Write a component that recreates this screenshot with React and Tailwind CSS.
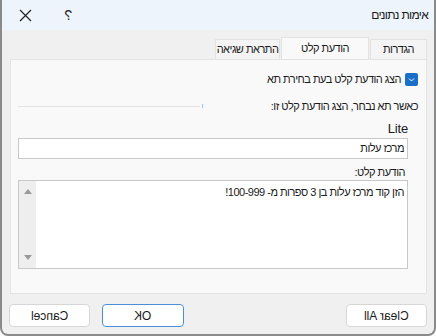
import React from 'react';

const font = { fontFamily: '"Liberation Sans", "DejaVu Sans", sans-serif' };

const tabs = [
  { label: 'הגדרות', w: 'w-[57px]', active: false },
  { label: 'הודעת קלט', w: 'w-[88px]', active: true },
  { label: 'התראת שגיאה', w: 'w-[65px]', active: false },
];

const Button = ({ label, primary, className }) => (
  <button
    className={`h-[23px] w-[81px] rounded-[4px] border bg-white text-[12px] tracking-normal text-[#1a1a1a] ${
      primary ? 'border-[#4a90d9]' : 'border-[#d6d6d6]'
    } ${className || ''}`}
  >
    <span className="inline-block -scale-x-100">{label}</span>
  </button>
);

const App = () => {
  return (
    <div
      dir="rtl"
      style={font}
      className="flex h-[336px] w-[436px] flex-col overflow-hidden rounded-b-lg border-2 border-t-0 border-[#8a8a8a] bg-[#f0f0f0] text-[11px] tracking-[-0.5px] text-[#1a1a1a]"
    >
      {/* title bar */}
      <div className="flex h-[30px] shrink-0 items-center justify-between bg-[#eef4fb] pl-[17px] pr-[6px]">
        <span className="text-[12px] tracking-[-0.7px]">אימות נתונים</span>
        <div className="flex items-center gap-[33px]">
          <span className="inline-block -scale-x-100 text-[14px]">?</span>
          <svg width="13" height="13" viewBox="0 0 13 13" className="text-[#222]">
            <path d="M1 1 L12 12 M12 1 L1 12" stroke="currentColor" strokeWidth="1.2" fill="none" />
          </svg>
        </div>
      </div>

      {/* tabs */}
      <div className="flex h-[29px] shrink-0 items-end gap-[1px] pr-[7px] pt-[7px]">
        {tabs.map((t) => (
          <div
            key={t.label}
            className={`flex items-center justify-center whitespace-nowrap border border-b-0 border-[#e3e3e3] ${t.w} ${
              t.active ? 'h-[22px] bg-[#f9f9f9]' : 'h-[20px] bg-[#f4f4f4]'
            }`}
          >
            {t.label}
          </div>
        ))}
      </div>

      {/* panel */}
      <div className="ml-[8px] mr-[7px] flex h-[235px] shrink-0 flex-col border border-[#e3e3e3] bg-[#f9f9f9] pl-[7px] pr-[18px]">
        <div className="-mr-[10px] mt-[13px] flex h-[13px] items-center gap-[4px]">
          <span className="flex h-[13px] w-[13px] items-center justify-center rounded-[2px] bg-[#1a6fc9]">
            <svg width="9" height="9" viewBox="0 0 9 9">
              <path d="M2 3.5 L4.5 6 L7 3.5" stroke="white" strokeWidth="1" fill="none" />
            </svg>
          </span>
          <span>הצג הודעת קלט בעת בחירת תא</span>
        </div>

        <div className="-mr-[10px] mt-[13px] flex h-[14px] items-center justify-between">
          <span>כאשר תא נבחר, הצג הודעת קלט זו:</span>
          <div className="flex items-center gap-[2px]">
            <span className="h-[4px] w-[1px] bg-[#9cc3e8]" />
            <span className="h-[1px] w-[182px] bg-[#e2e2e2]" />
          </div>
        </div>

        <div className="mt-[8px] h-[16px] text-[13px] leading-[16px] tracking-[-0.2px]">Lite</div>

        <div className="mt-[1px] flex h-[21px] items-center border border-[#c8c8c8] bg-white pr-[3px]">
          מרכז עלות
        </div>

        <div className="mt-[6px] h-[14px] pr-[3px] leading-[14px]">הודעת קלט:</div>

        <div className="mt-[1px] flex h-[89px] border border-[#c8c8c8] bg-white">
          <div className="flex-1 pr-[3px] pt-[3px]">הזן קוד מרכז עלות בן 3 ספרות מ- 100-999!</div>
          <div className="flex w-[17px] flex-col items-center justify-between bg-[#eeeeee] py-[8px]">
            <svg width="8" height="5" viewBox="0 0 8 5">
              <path d="M0 5 L4 0 L8 5 Z" fill="#9a9a9a" />
            </svg>
            <svg width="8" height="5" viewBox="0 0 8 5">
              <path d="M0 0 L8 0 L4 5 Z" fill="#9a9a9a" />
            </svg>
          </div>
        </div>
      </div>

      {/* buttons */}
      <div className="mt-[10px] flex shrink-0 justify-between pl-[7px] pr-[7px]">
        <Button label="Clear All" />
        <div className="flex gap-[12px]">
          <Button label="OK" primary className="w-[82px]" />
          <Button label="Cancel" />
        </div>
      </div>
    </div>
  );
};

export default App;
